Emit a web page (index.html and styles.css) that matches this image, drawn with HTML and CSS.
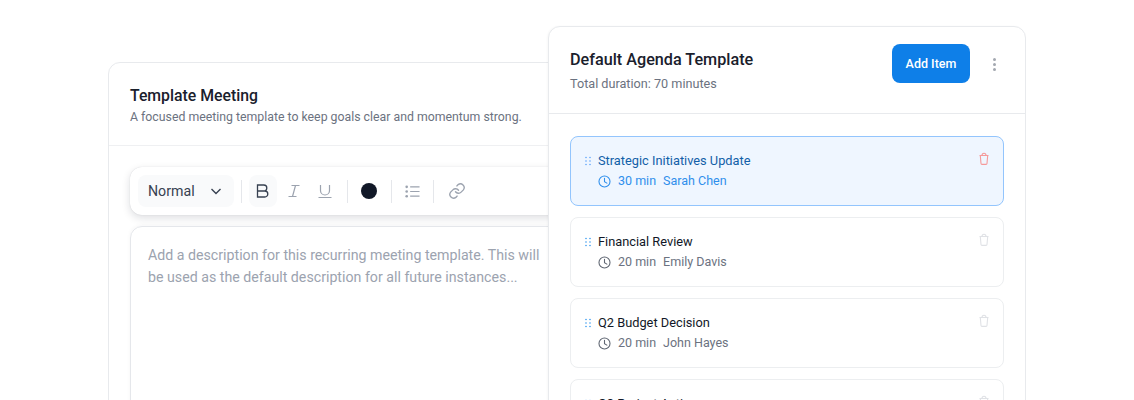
FILE: index.html
```html
<!DOCTYPE html>
<html lang="en">
<head>
<meta charset="utf-8">
<title>Template Meeting</title>
<link rel="stylesheet" href="styles.css">
</head>
<body>
<main class="stage">
  <section class="card meeting">
    <header class="meeting-head">
      <h2 class="meeting-title">Template Meeting</h2>
      <p class="meeting-sub">A focused meeting template to keep goals clear and momentum strong.</p>
    </header>
    <div class="meeting-body">
      <div class="toolbar">
        <div class="select"><span>Normal</span>
          <svg class="chev" viewBox="0 0 12 12"><path d="M1.5 4l4.5 4.5L10.500 4"/></svg>
        </div>
        <i class="sep"></i>
        <button class="tool tool-on">
          <svg viewBox="0 0 16 16" width="16" height="16"><path d="M2.500 2h6.300a3 3 0 0 1 0 6H2.500zM2.500 8h7.300a3 3 0 0 1 0 6H2.500z" class="ink"/></svg>
        </button>
        <button class="tool">
          <svg viewBox="0 0 16 16" width="16" height="16"><path d="M5.500 2.500h8M2.500 13.500h8M9.500 2.500l-3 11"/></svg>
        </button>
        <button class="tool tool-u">
          <svg viewBox="0 0 16 16" width="16" height="16"><path d="M3.500 2v5.500a4.500 4.500 0 0 0 9 0V2M1.500 14.500h13"/></svg>
        </button>
        <i class="sep sep-a"></i>
        <span class="swatch"></span>
        <i class="sep sep-b"></i>
        <svg class="ic-list" viewBox="0 0 16 16" width="15" height="15"><path d="M5.500 3h10M5.500 8h10M5.500 13h10"/><circle cx="1.800" cy="3" r="1.400"/><circle cx="1.800" cy="8" r="1.400"/><circle cx="1.800" cy="13" r="1.400"/></svg>
        <i class="sep sep-c"></i>
        <svg class="ic-link" viewBox="0 0 24 24" width="18" height="18"><path d="M10 13a5 5 0 0 0 7.500.5l3-3a5 5 0 0 0-7-7l-1.700 1.700"/><path d="M14 11a5 5 0 0 0-7.500-.5l-3 3a5 5 0 0 0 7 7l1.700-1.700"/></svg>
      </div>
      <div class="editor">Add a description for this recurring meeting template. This will be used as the default description for all future instances...</div>
    </div>
  </section>

  <section class="card agenda">
    <header class="agenda-head">
      <div class="agenda-text">
        <h2 class="agenda-title">Default Agenda Template</h2>
        <p class="agenda-sub">Total duration: 70 minutes</p>
      </div>
      <button class="add">Add Item</button>
      <span class="kebab"><b></b><b></b><b></b></span>
    </header>
    <div class="items">
      <article class="item active">
        <svg class="grip" viewBox="0 0 6 10" width="6" height="10"><circle cx="1" cy="1.500" r=".8"/><circle cx="5" cy="1.500" r=".8"/><circle cx="1" cy="5" r=".8"/><circle cx="5" cy="5" r=".8"/><circle cx="1" cy="8.500" r=".8"/><circle cx="5" cy="8.500" r=".8"/></svg>
        <div class="item-main">
          <h3 class="item-title">Strategic Initiatives Update</h3>
          <div class="item-meta">
            <svg class="clock" viewBox="0 0 12 12" width="13" height="13"><circle cx="6" cy="6" r="5.100"/><path d="M6 3v3.200l2.200 1.300"/></svg>
            <span>30 min</span><span>Sarah Chen</span>
          </div>
        </div>
        <svg class="trash" viewBox="0 0 12 14" width="12" height="14"><path d="M1.500 3.500h9M4 3.500C4 1.800 4.800 1.200 6 1.200S8 1.800 8 3.500M2.300 3.500l.7 8a1 1 0 0 0 1 .9h4a1 1 0 0 0 1-.9l.7-8"/></svg>
      </article>
      <article class="item">
        <svg class="grip" viewBox="0 0 6 10" width="6" height="10"><circle cx="1" cy="1.500" r=".8"/><circle cx="5" cy="1.500" r=".8"/><circle cx="1" cy="5" r=".8"/><circle cx="5" cy="5" r=".8"/><circle cx="1" cy="8.500" r=".8"/><circle cx="5" cy="8.500" r=".8"/></svg>
        <div class="item-main">
          <h3 class="item-title">Financial Review</h3>
          <div class="item-meta">
            <svg class="clock" viewBox="0 0 12 12" width="13" height="13"><circle cx="6" cy="6" r="5.100"/><path d="M6 3v3.200l2.200 1.300"/></svg>
            <span>20 min</span><span>Emily Davis</span>
          </div>
        </div>
        <svg class="trash" viewBox="0 0 12 14" width="12" height="14"><path d="M1.500 3.500h9M4 3.500C4 1.800 4.800 1.200 6 1.200S8 1.800 8 3.500M2.300 3.500l.7 8a1 1 0 0 0 1 .9h4a1 1 0 0 0 1-.9l.7-8"/></svg>
      </article>
      <article class="item">
        <svg class="grip" viewBox="0 0 6 10" width="6" height="10"><circle cx="1" cy="1.500" r=".8"/><circle cx="5" cy="1.500" r=".8"/><circle cx="1" cy="5" r=".8"/><circle cx="5" cy="5" r=".8"/><circle cx="1" cy="8.500" r=".8"/><circle cx="5" cy="8.500" r=".8"/></svg>
        <div class="item-main">
          <h3 class="item-title">Q2 Budget Decision</h3>
          <div class="item-meta">
            <svg class="clock" viewBox="0 0 12 12" width="13" height="13"><circle cx="6" cy="6" r="5.100"/><path d="M6 3v3.200l2.200 1.300"/></svg>
            <span>20 min</span><span>John Hayes</span>
          </div>
        </div>
        <svg class="trash" viewBox="0 0 12 14" width="12" height="14"><path d="M1.500 3.500h9M4 3.500C4 1.800 4.800 1.200 6 1.200S8 1.800 8 3.500M2.300 3.500l.7 8a1 1 0 0 0 1 .9h4a1 1 0 0 0 1-.9l.7-8"/></svg>
      </article>
      <article class="item">
        <svg class="grip" viewBox="0 0 6 10" width="6" height="10"><circle cx="1" cy="1.500" r=".8"/><circle cx="5" cy="1.500" r=".8"/><circle cx="1" cy="5" r=".8"/><circle cx="5" cy="5" r=".8"/><circle cx="1" cy="8.500" r=".8"/><circle cx="5" cy="8.500" r=".8"/></svg>
        <div class="item-main">
          <h3 class="item-title">Q3 Project Action</h3>
        </div>
        <svg class="trash" viewBox="0 0 12 14" width="12" height="14"><path d="M1.500 3.500h9M4 3.500C4 1.800 4.800 1.200 6 1.200S8 1.800 8 3.500M2.300 3.500l.7 8a1 1 0 0 0 1 .9h4a1 1 0 0 0 1-.9l.7-8"/></svg>
      </article>
    </div>
  </section>
</main>
</body>
</html>
```
FILE: styles.css
```css
* { box-sizing: border-box; }
html, body { margin: 0; height: 400px; overflow: hidden; background: #fff; }
body { font-family: Roboto, "Liberation Sans", sans-serif; color: #111827; }
h2, h3, p { margin: 0; }
.stage { position: relative; width: 1134px; height: 400px; padding: 62px 0 0 108px; overflow: hidden; }
.card { background: #fff; border: 1px solid #e8eaed; border-radius: 12px; }

.meeting { width: 490px; height: 500px; }
.meeting-head { height: 83px; padding: 23px 21px 0; border-bottom: 1px solid #eff0f2; }
.meeting-title { font-size: 15.800px; line-height: 20px; font-weight: 500; color: #1a202c; }
.meeting-sub { margin-top: 3px; font-size: 12.300px; line-height: 16px; color: #6b7280; white-space: nowrap; }
.meeting-body { padding: 21px 21px 0; }

.toolbar { display: flex; align-items: center; width: 440px; height: 48px; padding: 0 8px; background: #fff; border-radius: 12px; box-shadow: 0 0 1px rgba(17,24,39,.18), 0 3px 8px rgba(17,24,39,.14); }
.select { display: flex; align-items: center; justify-content: space-between; width: 96px; height: 32px; padding: 0 12px 0 10px; background: #f9fafb; border-radius: 8px; font-size: 14.200px; color: #374151; }
.chev { width: 12px; height: 12px; fill: none; stroke: #374151; stroke-width: 1.400; }
.sep { flex: none; width: 1px; height: 23px; margin: 0 7px; background: #e5e7eb; }
.tool { display: flex; align-items: center; justify-content: center; width: 28px; height: 32px; padding: 0; border: 0; border-radius: 8px; background: none; margin-right: 3px; }
.tool svg { fill: none; stroke: #9ca3af; stroke-width: 1.200; }
.tool-on { background: #f9fafb; }
.tool-on svg { stroke: #374151; stroke-width: 1.300; }
.tool-u { margin-right: 0; }
.sep-a { margin: 0 13px 0 8px; }
.swatch { flex: none; width: 16px; height: 16px; border-radius: 50%; background: #111827; }
.sep-b { margin: 0 13px 0 14px; }
.ic-list { flex: none; }
.ic-list path { fill: none; stroke: #9ca3af; stroke-width: 1.300; }
.ic-list circle { fill: #9ca3af; }
.sep-c { margin: 0 14px 0 13px; }
.ic-link { flex: none; fill: none; stroke: #9ca3af; stroke-width: 1.800; stroke-linecap: round; }

.editor { width: 440px; height: 300px; margin-top: 11px; padding: 18px 17px 0; border: 1px solid #e5e7eb; border-radius: 12px; font-size: 14.200px; line-height: 21.700px; color: #9ca3af; box-shadow: 0 -1px 4px rgba(17,24,39,.04); }

.agenda { position: absolute; left: 548px; top: 26px; width: 478px; height: 420px; box-shadow: -1px 0 2px rgba(17,24,39,.03); }
.agenda-head { display: flex; align-items: flex-start; height: 87px; padding: 17px 21px 0; border-bottom: 1px solid #e8eaed; }
.agenda-text { flex: 1; padding-top: 6px; }
.agenda-title { font-size: 16.200px; line-height: 20px; font-weight: 500; color: #1a202c; }
.agenda-sub { margin-top: 5px; font-size: 12.650px; line-height: 18px; color: #6b7280; }
.add { width: 78px; height: 39px; border: 0; border-radius: 8px; background: #0e7fe8; color: #fff; font: 500 12.500px Roboto, sans-serif; }
.kebab { display: flex; flex-direction: column; gap: 2px; margin: 14px 8px 0 23px; }
.kebab b { width: 3px; height: 3px; border-radius: 50%; background: #a3a8b0; }

.items { display: flex; flex-direction: column; gap: 11px; padding: 22px 21px 0; }
.item { flex: none; display: flex; align-items: flex-start; height: 70px; padding: 14px 14px 0 14px; border: 1px solid #eceef0; border-radius: 8px; background: #fff; }
.active { background: #eff6ff; border-color: #93c5fd; }
.grip { flex: none; margin: 5px 7px 0 0; fill: #3b9bf0; }
.active .grip { fill: #60a5fa; }
.item-main { flex: 1; }
.item-title { font-size: 12.800px; line-height: 20px; font-weight: 450; color: #111827; }
.active .item-title { color: #1260a8; }
.item-meta { display: flex; align-items: center; gap: 7px; font-size: 12.500px; line-height: 20px; color: #6b7280; }
.item-meta span:first-of-type { margin-right: 0; }
.active .item-meta { color: #2f8fec; }
.clock { flex: none; fill: none; stroke: #5f6672; stroke-width: 1; stroke-linecap: round; }
.active .clock { stroke: #2f8fec; }
.trash { flex: none; margin: 1px -1px 0 0; fill: none; stroke: #e0e2e6; stroke-width: 1.100; stroke-linejoin: round; }
.active .trash { stroke: #f59a9a; }
```
